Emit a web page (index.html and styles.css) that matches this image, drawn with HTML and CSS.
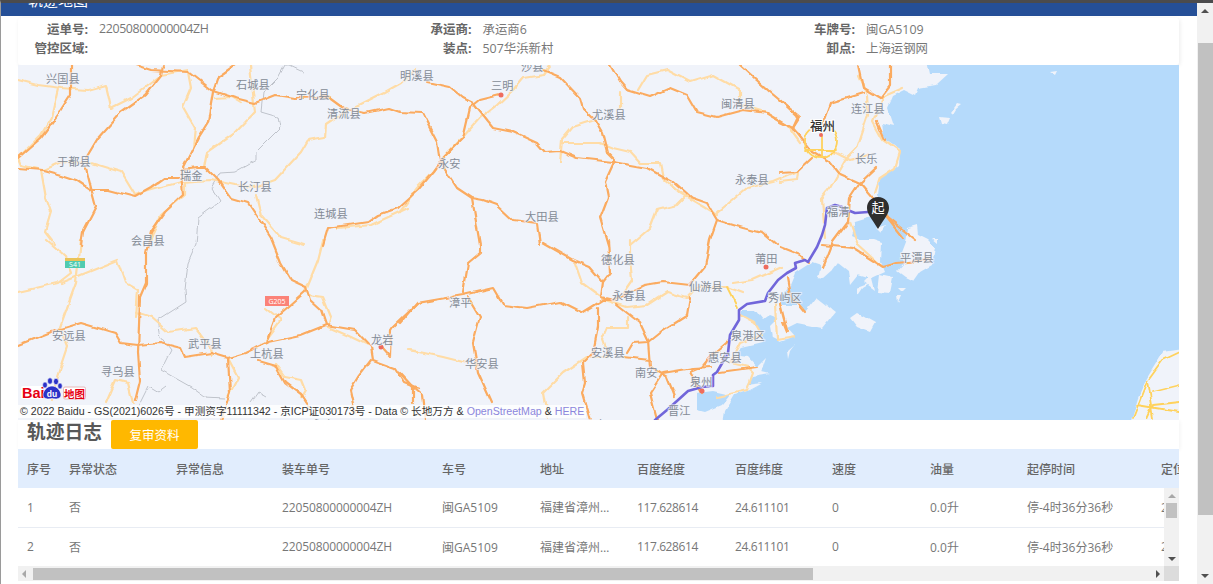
FILE: index.html
```html
<!DOCTYPE html>
<html lang="zh-CN">
<head>
<meta charset="utf-8">
<title>轨迹地图</title>
<link rel="stylesheet" href="styles.css">
</head>
<body>
<div class="window">
  <div class="main">
    <header class="topbar"><span class="topbar-title">轨迹地图</span></header>
    <div class="content">
      <section class="info-card">
        <div class="info-item"><span class="info-label">运单号:</span><span class="info-value info-id">22050800000004ZH</span></div>
        <div class="info-item"><span class="info-label">承运商:</span><span class="info-value">承运商6</span></div>
        <div class="info-item"><span class="info-label">车牌号:</span><span class="info-value">闽GA5109</span></div>
        <div class="info-item"><span class="info-label">管控区域:</span><span class="info-value"></span></div>
        <div class="info-item"><span class="info-label">装点:</span><span class="info-value">507华浜新村</span></div>
        <div class="info-item"><span class="info-label">卸点:</span><span class="info-value">上海运钢网</span></div>
      </section>

      <div class="map">
        <svg class="map-svg" viewBox="18 65 1161 355" width="1161" height="355" xmlns="http://www.w3.org/2000/svg">
          <defs>
            <filter id="wiggle" filterUnits="userSpaceOnUse" x="18" y="65" width="1161" height="355">
              <feTurbulence type="fractalNoise" baseFrequency="0.07" numOctaves="2" seed="4" result="noise"/>
              <feDisplacementMap in="SourceGraphic" in2="noise" scale="5" xChannelSelector="R" yChannelSelector="G"/>
              <feGaussianBlur stdDeviation="0.35"/>
            </filter>
          </defs>
          <rect class="sea" x="18" y="65" width="1161" height="355"/>
          <g class="wiggly">
          <path class="land" d="M10,60 L927,60 930,74 948,74 936,85 918,88 915,95 905,90 893,96 888,108 894,126 882,123 884,139 900,150 899,165 890,172 880,178 878,195 887,212 878,215 855,222 851,235 862,240 873,240 882,243 881,262 885,272 872,278 875,290 864,282 868,278 858,275 850,285 848,270 838,262 832,270 823,278 818,277 821,265 812,262 795,273 790,285 780,300 782,305 800,305 805,313 817,298 835,312 822,328 797,323 787,328 795,337 780,342 772,338 770,326 778,318 770,315 763,320 755,310 741,310 741,317 755,322 762,335 763,342 742,347 733,355 748,357 757,367 767,357 762,372 770,374 753,377 747,385 763,383 750,390 735,395 725,412 723,425 L10,425 Z"/>
          <path class="sea" d="M697,393 L712,391 730,395 722,405 705,412 697,410 Z"/>
          <path class="land" d="M907,228 L917,225 918,235 928,240 935,247 932,265 920,272 913,282 905,278 897,272 905,263 900,255 905,242 Z M850,318 L857,313 875,323 870,332 857,327 Z M940,117 L950,118 947,125 942,124 Z M950,112 L956,104 960,105 955,109 952,114 Z M1050,72 L1057,71 1055,75 Z M875,228 L885,225 880,233 Z M880,275 L893,278 890,293 878,292 Z M898,288 L906,288 902,292 Z M897,295 L901,295 898,302 Z M795,345 L787,352 788,360 790,352 Z M857,288 L873,282 863,288 857,297 Z M932,238 L938,238 938,243 Z M1190,348 L1163,352 1147,378 1138,398 1130,425 1190,425 Z"/>
          </g>

          <g class="border-line wiggly">
            <polyline points="303,72 288,65 285,65 278,78 263,93 261,112 278,117 280,128 256,152 256,160 235,172 220,173 211,188 220,202 198,218 196,245 188,263 185,290 186,302 158,320 161,337 171,350 161,370 191,387 205,397 225,398"/>
            <polyline points="138,407 148,387 158,393 166,387"/>
            <polyline points="251,403 258,393 265,397"/>
          </g>

          <g class="road-minor wiggly">
            <polyline points="18,80 38,85 61,88 88,90 106,85 111,108 131,98 161,75 188,70"/>
            <polyline points="58,88 51,118 41,135 18,158 21,165 41,170 46,198 51,212 45,232 55,245"/>
            <polyline points="43,170 61,162 91,163 121,172 135,195 151,190 181,182 211,180 235,185 255,187 275,180 301,152 308,140 325,137 326,125 345,112 365,102 385,92 401,83 415,70"/>
            <polyline points="188,72 191,88 183,107 195,128 193,148"/>
            <polyline points="250,65 255,112 235,133 208,152 205,168"/>
            <polyline points="215,98 231,97 241,103"/>
            <polyline points="185,182 185,195 161,215 148,245"/>
            <polyline points="256,195 261,215 281,238 305,245"/>
            <polyline points="408,208 371,225 338,228"/>
            <polyline points="46,240 65,257 71,273 58,283 18,292"/>
            <polyline points="81,240 76,283 60,327 68,347 56,383 51,400"/>
            <polyline points="61,283 118,260 126,283 138,290 136,317"/>
            <polyline points="136,312 151,317 168,332 195,328 210,347 211,355"/>
            <polyline points="105,403 115,380 128,383 133,403"/>
            <polyline points="228,358 238,377 228,397"/>
            <polyline points="305,292 318,260 323,240"/>
            <polyline points="308,295 323,297 331,317 328,327 351,337 368,345"/>
            <polyline points="266,308 281,320 266,340"/>
            <polyline points="275,363 285,377 301,380 305,390 301,397"/>
            <polyline points="408,350 418,351"/>
            <polyline points="550,65 543,75 523,78 513,90 497,105 480,118 463,137 443,158 433,172 417,188 400,212"/>
            <polyline points="595,120 573,127 562,140 560,162"/>
            <polyline points="562,143 580,143 600,143 613,148 630,152 640,163 660,163 663,178 680,193 717,215"/>
            <polyline points="620,92 620,108"/>
            <polyline points="740,90 713,75 690,82 667,70 647,75 638,90"/>
            <polyline points="740,90 740,105 767,113 787,125 800,143"/>
            <polyline points="687,195 677,205 657,210 650,228 630,245"/>
            <polyline points="717,213 747,188 773,182 797,172"/>
            <polyline points="630,240 630,257 632,280 623,293"/>
            <polyline points="575,263 582,283 605,300 627,307 647,305 667,292 687,298 697,287 727,287 743,293"/>
            <polyline points="628,317 628,328 607,328 602,340 608,357 587,357 563,373 543,393 547,417"/>
            <polyline points="410,350 443,357 467,363"/>
            <polyline points="740,315 755,323 762,335 740,343 730,363 747,367 753,373 747,390 717,397"/>
            <polyline points="775,303 777,340 795,337"/>
            <polyline points="733,283 753,280 783,267"/>
            <polyline points="858,75 867,95 868,115 857,148 847,158 830,188 822,198 825,238"/>
            <polyline points="880,98 903,88"/>
            <polyline points="883,98 873,122 883,140 900,152 895,168 880,178 875,193"/>
            <polyline points="850,222 858,245 880,265"/>
            <polyline points="780,182 797,180 798,172"/>
            <polyline points="830,150 850,160 868,155"/>
          </g>

          <g class="road-major wiggly">
            <polyline points="18,168 43,170 61,175 76,180 91,190 108,190 135,197 151,188 165,178 181,178"/>
            <polyline points="181,170 198,168 206,168 218,180 231,198 248,203 258,218 271,238 281,263 291,280 306,287 310,300 321,310 326,325 355,330 371,347 373,360 395,368 405,383 418,388"/>
            <polyline points="183,168 198,138 208,122 213,92 218,77 235,65"/>
            <polyline points="181,172 183,195 165,212 151,232 146,253 146,283 140,297 138,353 140,380 135,400"/>
            <polyline points="18,158 41,138 58,115 71,95 71,65"/>
            <polyline points="86,158 98,138 121,112 145,95 161,75 163,65"/>
            <polyline points="86,168 91,188 96,207 83,232 81,245"/>
            <polyline points="135,65 151,70 188,72 211,90 235,98 255,103 275,95 295,98 328,97 343,108 365,113 388,108 400,112 422,113 437,142 440,162 457,188 472,198 483,200 497,205 513,220 537,223 540,245"/>
            <polyline points="323,245 328,228 368,222 378,215 398,208 418,190 433,172 443,158 463,138 470,108 480,100 500,95"/>
            <polyline points="427,82 450,87 463,98 473,103 488,122 493,128 513,132 537,143 545,152 560,151 577,158 613,162 647,168 673,182 690,197 707,203 717,220 743,228 763,233 777,245"/>
            <polyline points="543,70 560,77 580,98 583,108 595,120 602,132 607,152 615,160 605,182 608,197 600,218 608,245"/>
            <polyline points="610,65 620,82 627,90 650,97 670,88 687,95 697,112 717,117 743,110 767,113 787,125 800,135"/>
            <polyline points="740,65 770,92 800,117 793,128"/>
            <polyline points="472,198 480,245 480,253 468,263 463,293"/>
            <polyline points="400,323 417,303 463,295 493,288 503,305 527,308 560,302 582,313 603,300 613,300"/>
            <polyline points="468,297 480,317 473,343 478,372 492,403"/>
            <polyline points="543,243 573,260 590,267 603,282 610,273 608,240"/>
            <polyline points="603,282 601,297 613,300"/>
            <polyline points="617,305 640,323 648,340 650,367 667,377 675,397"/>
            <polyline points="598,308 598,327 593,353 583,363 585,383 582,393 590,420"/>
            <polyline points="613,300 645,285 663,282 690,285 705,267 710,240 717,220"/>
            <polyline points="627,353 633,343 648,342 663,330 687,315 690,297"/>
            <polyline points="623,357 650,360"/>
            <polyline points="657,420 650,393 663,373 693,368 710,367"/>
            <polyline points="780,303 787,330"/>
            <polyline points="702,393 690,372 702,367 710,357 730,340"/>
            <polyline points="720,372 757,367"/>
            <polyline points="18,345 51,332 81,323 98,328 115,333 121,343 138,345 161,343 181,348 185,357 211,353 228,358 245,353 268,342 301,335 326,325"/>
            <polyline points="228,358 230,393 221,420"/>
            <polyline points="266,343 275,318 288,307 305,292"/>
            <polyline points="258,360 275,365 285,383 301,395 311,410"/>
            <polyline points="371,360 358,377 350,390 355,413"/>
            <polyline points="381,347 390,357 391,330 393,327 418,303"/>
            <polyline points="400,373 413,387 422,395 425,420"/>
            <polyline points="413,387 413,403"/>
            <polyline points="858,65 863,88 880,98 890,85 890,65"/>
            <polyline points="830,103 863,93"/>
            <polyline points="830,103 822,125"/>
            <polyline points="780,100 798,117 793,128 780,122"/>
            <polyline points="793,128 812,152 830,163 838,173 860,183 873,198 887,218 903,238"/>
            <polyline points="887,218 915,240"/>
            <polyline points="860,183 850,198 848,222 833,242 823,268"/>
            <polyline points="860,183 877,167"/>
            <polyline points="780,173 797,172 812,158"/>
            <polyline points="822,245 853,248 880,265 883,267 897,263 930,260"/>
            <polyline points="780,247 800,255 808,262"/>
            <polyline points="787,278 790,295 805,313"/>
            <polyline points="783,322 787,332"/>
            <polyline points="877,122 885,140"/>
          </g>

          <g class="road-yellow wiggly">
            <circle cx="821" cy="142" r="16"/>
            <polyline points="806,150 836,150"/>
            <polyline points="821,126 821,158"/>
            <polyline points="727,287 737,307"/>
            <polyline points="1180,352 1163,360 1147,382 1133,418"/>
            <polyline points="1147,382 1153,418"/>
            <polyline points="1137,405 1180,412"/>
            <polyline points="1152,392 1180,385"/>
            <polyline points="1180,402 1153,405 1147,418"/>
          </g>

          <polyline class="route" points="868,212 855,213 850,211 843,212 842,207 835,205 827,208 825,225 822,235 817,247 808,262 805,260 795,263 796,268 787,273 778,280 768,293 765,301 747,304 739,310 739,320 730,335 728,353 717,372 713,375 713,386 702,387 688,391 667,410 655,420"/>

          <g class="city-dot">
            <circle cx="501" cy="95" r="2.5"/>
            <circle cx="381" cy="347" r="2.5"/>
            <circle cx="766" cy="267" r="2.5"/>
            <circle cx="702" cy="391" r="2.5"/>
            <circle cx="821" cy="135" r="2"/>
          </g>

          <g class="labels">
            <text x="46" y="83">兴国县</text><text x="236" y="89">石城县</text><text x="296" y="99">宁化县</text>
            <text x="327" y="118">清流县</text><text x="400" y="80">明溪县</text><text x="491" y="90">三明</text>
            <text x="521" y="71">沙县</text><text x="592" y="119">尤溪县</text><text x="721" y="108">闽清县</text>
            <text x="851" y="113">连江县</text><text x="855" y="163">长乐</text><text x="735" y="184">永泰县</text>
            <text x="57" y="166">于都县</text><text x="180" y="180">瑞金</text><text x="238" y="191">长汀县</text>
            <text x="438" y="168">永安</text><text x="525" y="221">大田县</text><text x="314" y="218">连城县</text>
            <text x="131" y="245">会昌县</text><text x="601" y="264">德化县</text><text x="827" y="216">福清</text>
            <text x="755" y="263">莆田</text><text x="900" y="262">平潭县</text><text x="449" y="307">漳平</text>
            <text x="612" y="300">永春县</text><text x="689" y="291">仙游县</text><text x="768" y="302">秀屿区</text>
            <text x="52" y="340">安远县</text><text x="188" y="348">武平县</text><text x="250" y="358">上杭县</text>
            <text x="371" y="344">龙岩</text><text x="731" y="340">泉港区</text><text x="591" y="357">安溪县</text>
            <text x="465" y="368">华安县</text><text x="708" y="362">惠安县</text><text x="635" y="377">南安</text>
            <text x="101" y="376">寻乌县</text><text x="690" y="386">泉州</text><text x="668" y="415">晋江</text>
            <text x="584" y="429">同安区</text><text x="312" y="429">永定区</text>
          </g>
          <text class="label-capital" x="810" y="131">福州</text>

          <g class="shield">
            <rect class="shield-s-top" x="65" y="258" width="20" height="3"/>
            <rect class="shield-s" x="65" y="261" width="20" height="7"/>
            <text class="shield-text" x="75" y="267">S41</text>
            <rect class="shield-g" x="265" y="296" width="24" height="10"/>
            <text class="shield-text" x="277" y="304">G205</text>
          </g>

          <g class="pin">
            <path class="pin-body" d="M878,197 C885,197 889,202 889,208 C889,214 884,219 878,229 C872,219 867,214 867,208 C867,202 871,197 878,197 Z"/>
            <text class="pin-text" x="878" y="212">起</text>
          </g>

          <g class="logo">
            <rect class="logo-plate" x="21" y="386" width="22" height="13" rx="2"/>
            <text class="logo-bai" x="22" y="398">Bai</text>
            <g class="logo-paw">
              <ellipse cx="45" cy="385" rx="2.4" ry="3"/>
              <ellipse cx="50" cy="381" rx="2.5" ry="3.2"/>
              <ellipse cx="56" cy="381.5" rx="2.5" ry="3.2"/>
              <ellipse cx="60" cy="386" rx="2.3" ry="3"/>
              <path d="M52,386 C57,386 61,391 61,395 C61,399 56,399.5 52,398.5 C48,399.5 43,399 43,395 C43,391 47,386 52,386 Z"/>
            </g>
            <text class="logo-du" x="52" y="397">du</text>
            <rect class="logo-box" x="63.5" y="387" width="22" height="12" rx="1.5"/>
            <text class="logo-map" x="64" y="397.5">地图</text>
          </g>
        </svg>
        <div class="attribution">© 2022 Baidu - GS(2021)6026号 - 甲测资字11111342 - 京ICP证030173号 - Data © 长地万方 &amp; <span class="attribution-link">OpenStreetMap</span> &amp; <span class="attribution-link">HERE</span></div>
      </div>

      <section class="log">
        <div class="log-head">
          <h2 class="log-title">轨迹日志</h2>
          <button class="review-btn" type="button">复审资料</button>
        </div>
        <div class="table-clip">
          <table class="grid grid-head">
            <colgroup><col class="c1"><col class="c2"><col class="c3"><col class="c4"><col class="c5"><col class="c6"><col class="c7"><col class="c8"><col class="c9"><col class="c10"><col class="c11"><col class="c12"></colgroup>
            <thead><tr><th>序号</th><th>异常状态</th><th>异常信息</th><th>装车单号</th><th>车号</th><th>地址</th><th>百度经度</th><th>百度纬度</th><th>速度</th><th>油量</th><th>起停时间</th><th>定位时间</th></tr></thead>
          </table>
        </div>
        <div class="table-body">
          <div class="rows">
            <table class="grid">
              <colgroup><col class="c1"><col class="c2"><col class="c3"><col class="c4"><col class="c5"><col class="c6"><col class="c7"><col class="c8"><col class="c9"><col class="c10"><col class="c11"><col class="c12"></colgroup>
              <tbody>
                <tr><td>1</td><td>否</td><td></td><td class="id">22050800000004ZH</td><td>闽GA5109</td><td>福建省漳州市漳浦县</td><td class="num">117.628614</td><td class="num">24.611101</td><td>0</td><td>0.0升</td><td>停-4时36分36秒</td><td>2022-05-08</td></tr>
                <tr><td>2</td><td>否</td><td></td><td class="id">22050800000004ZH</td><td>闽GA5109</td><td>福建省漳州市漳浦县</td><td class="num">117.628614</td><td class="num">24.611101</td><td>0</td><td>0.0升</td><td>停-4时36分36秒</td><td>2022-05-08</td></tr>
              </tbody>
            </table>
          </div>
          <div class="vbar-inner">
            <span class="arrow arrow-up arrow-muted"></span>
            <span class="vbar-inner-thumb"></span>
            <span class="vbar-inner-space"></span>
            <span class="arrow arrow-down"></span>
          </div>
        </div>
        <div class="hbar">
          <span class="arrow arrow-left arrow-muted"></span>
          <div class="hbar-track"><span class="hbar-thumb"></span></div>
          <span class="arrow arrow-right"></span>
          <span class="hbar-corner"></span>
        </div>
      </section>
    </div>
  </div>
  <aside class="vbar">
    <span class="arrow arrow-up"></span>
    <span class="vbar-thumb"></span>
    <span class="vbar-space"></span>
    <span class="arrow arrow-down"></span>
  </aside>
</div>
</body>
</html>
```

FILE: styles.css
```css
html, body {
  margin: 0;
  height: 584px;
  overflow: hidden;
  background: #fff;
  font-family: "Open Sans", "Noto Sans CJK SC", sans-serif;
  font-size: 12px;
  color: #666;
}

.window {
  display: flex;
  height: 584px;
  border-top: 3px solid #4b4b4d;
  box-sizing: border-box;
  border-left: 1px solid #9a9a9a;
}

.main {
  flex: 1;
  min-width: 0;
  display: flex;
  flex-direction: column;
}

.topbar {
  height: 13px;
  flex: none;
  background: #254f97;
  overflow: hidden;
  padding-left: 27px;
}

.topbar-title {
  display: block;
  margin-top: -13px;
  font-size: 15px;
  line-height: 20px;
  color: #fff;
}

.content {
  margin: 2px 17px 0;
  width: 1161px;
}

.info-card {
  display: grid;
  grid-template-columns: repeat(3, 383.5px);
  grid-auto-rows: 19px;
  align-content: start;
  height: 47px;
  box-sizing: border-box;
  padding-top: 1px;
  background: #fff;
  border-radius: 3px;
  box-shadow: 1px 1px 4px rgba(0, 0, 0, .08);
}

.info-item {
  display: flex;
  align-items: center;
  white-space: nowrap;
}

.info-label {
  width: 70px;
  margin-right: 11px;
  text-align: right;
  font-size: 12.5px;
  font-weight: 700;
  color: #666;
}

.info-value {
  font-size: 12.4px;
  color: #777;
}

.info-id {
  letter-spacing: -.37px;
}

.map {
  position: relative;
  height: 355px;
  overflow: hidden;
}

.map-svg {
  display: block;
}

.wiggly { filter: url(#wiggle); }

.sea { fill: #b5dafb; }
.land { fill: #f0f3fa; }

.border-line polyline {
  fill: none;
  stroke: #bfc3cb;
  stroke-width: 1;
}

.road-minor polyline,
.road-major polyline,
.road-yellow polyline,
.road-yellow circle,
.route {
  fill: none;
  stroke-linejoin: round;
  stroke-linecap: round;
}

.road-minor polyline { stroke: #ffdca6; stroke-width: 2.2; }
.road-major polyline { stroke: #fbab60; stroke-width: 2.2; }
.road-yellow polyline,
.road-yellow circle { stroke: #ffd25c; stroke-width: 1.8; }

.route { stroke: #7166da; stroke-width: 2.6; }

.city-dot circle { fill: #ee6c5e; }

.labels text {
  font-size: 11.2px;
  fill: #848b96;
  stroke: rgba(240, 243, 250, .7);
  stroke-width: 2px;
  paint-order: stroke;
}

.label-capital {
  font-size: 12.5px;
  font-weight: 500;
  fill: #333;
  stroke: #fff;
  stroke-width: 2px;
  paint-order: stroke;
}

.shield-s-top { fill: #e9c35a; }
.shield-s { fill: #4fcbb0; }
.shield-g { fill: #fb8278; }

.shield-text {
  font-size: 7px;
  fill: #fff;
  text-anchor: middle;
}

.pin-body { fill: #2e2e2e; }

.pin-text {
  font-size: 13px;
  fill: #fff;
  text-anchor: middle;
}

.logo-plate { fill: #fff; }

.logo-bai {
  font-family: "Liberation Sans", sans-serif;
  font-size: 14.5px;
  font-weight: 700;
  fill: #e60012;
}

.logo-paw { fill: #2b32c8; stroke: #fff; stroke-width: .6px; }

.logo-du {
  font-family: "Liberation Sans", sans-serif;
  font-size: 8.5px;
  font-weight: 700;
  fill: #fff;
  text-anchor: middle;
}

.logo-box { fill: #fff; stroke: #e8b8b8; }

.logo-map {
  font-size: 10.5px;
  font-weight: 700;
  fill: #e60012;
}

.attribution {
  position: absolute;
  left: 0;
  bottom: 2px;
  padding: 0 2px;
  height: 13px;
  line-height: 13px;
  font-family: "Liberation Sans", "Noto Sans CJK SC", sans-serif;
  font-size: 10.65px;
  white-space: nowrap;
  color: #333;
  background: rgba(255, 255, 255, .78);
}

.attribution-link { color: #8b86dc; }

.log {
  background: #fff;
}

.log-head {
  display: flex;
  height: 29px;
  box-shadow: 1px 1px 4px rgba(0, 0, 0, .05);
}

.log-title {
  margin: 0 9px;
  width: 75px;
  font-size: 18.8px;
  line-height: 25px;
  font-weight: 700;
  color: #585858;
  white-space: nowrap;
}

.review-btn {
  width: 87px;
  height: 29px;
  padding: 0;
  border: 0;
  border-radius: 2px;
  background: #ffb800;
  color: #fff;
  font: inherit;
  font-size: 12.5px;
}

.table-clip {
  overflow: hidden;
}

.grid {
  table-layout: fixed;
  border-collapse: collapse;
  width: 1294px;
}

.c1 { width: 42px; }
.c2 { width: 107px; }
.c3 { width: 106px; }
.c4 { width: 160px; }
.c5 { width: 98px; }
.c6 { width: 97px; }
.c7 { width: 98px; }
.c8 { width: 97px; }
.c9 { width: 98px; }
.c10 { width: 97px; }
.c11 { width: 134px; }
.c12 { width: 160px; }

.grid th,
.grid td {
  padding: 0 9px;
  text-align: left;
  white-space: nowrap;
  overflow: hidden;
  text-overflow: ellipsis;
}

.grid th {
  height: 39px;
  background: #e1edfd;
  font-weight: 500;
  color: #666;
}

.grid td {
  height: 39px;
  box-sizing: border-box;
  border-bottom: 1px solid #e8ecf3;
  color: #777;
}

.grid .id { letter-spacing: -.12px; }
.grid .num { letter-spacing: -.4px; }

.table-body {
  display: flex;
  height: 78px;
}

.rows {
  flex: 1;
  min-width: 0;
  overflow: hidden;
}

.arrow {
  display: block;
  flex: none;
  width: 0;
  height: 0;
  border: 4px solid transparent;
}

.arrow-up { border-top-width: 0; border-bottom: 4px solid #505050; }
.arrow-down { border-bottom-width: 0; border-top: 4px solid #505050; }
.arrow-left { border-left-width: 0; border-right: 4px solid #505050; }
.arrow-right { border-right-width: 0; border-left: 4px solid #505050; }
.arrow-up.arrow-muted { border-bottom-color: #a8a8a8; }
.arrow-left.arrow-muted { border-right-color: #a8a8a8; }

.vbar-inner {
  width: 15px;
  flex: none;
  display: flex;
  flex-direction: column;
  align-items: center;
  background: #f1f1f1;
  padding: 6px 0 5px;
  box-sizing: border-box;
}

.vbar-inner-thumb {
  display: block;
  width: 11px;
  height: 15px;
  margin-top: 5px;
  background: #c1c1c1;
}

.vbar-inner-space { flex: 1; }

.hbar {
  display: flex;
  align-items: center;
  height: 15px;
  background: #f1f1f1;
  padding-left: 4px;
}

.hbar-track {
  flex: 1;
  padding: 0 7px 0 7px;
}

.hbar-thumb {
  display: block;
  width: 780px;
  height: 12px;
  background: #c1c1c1;
}

.hbar-corner {
  width: 15px;
  height: 15px;
  margin-left: 4px;
  background: #dcdcdc;
}

.vbar {
  width: 16px;
  flex: none;
  display: flex;
  flex-direction: column;
  align-items: center;
  background: #f1f1f1;
  padding: 6px 0 6px;
  box-sizing: border-box;
}

.vbar-thumb {
  display: block;
  width: 15px;
  height: 472px;
  margin-top: 30px;
  background: #c1c1c1;
}

.vbar-space { flex: 1; }
```
